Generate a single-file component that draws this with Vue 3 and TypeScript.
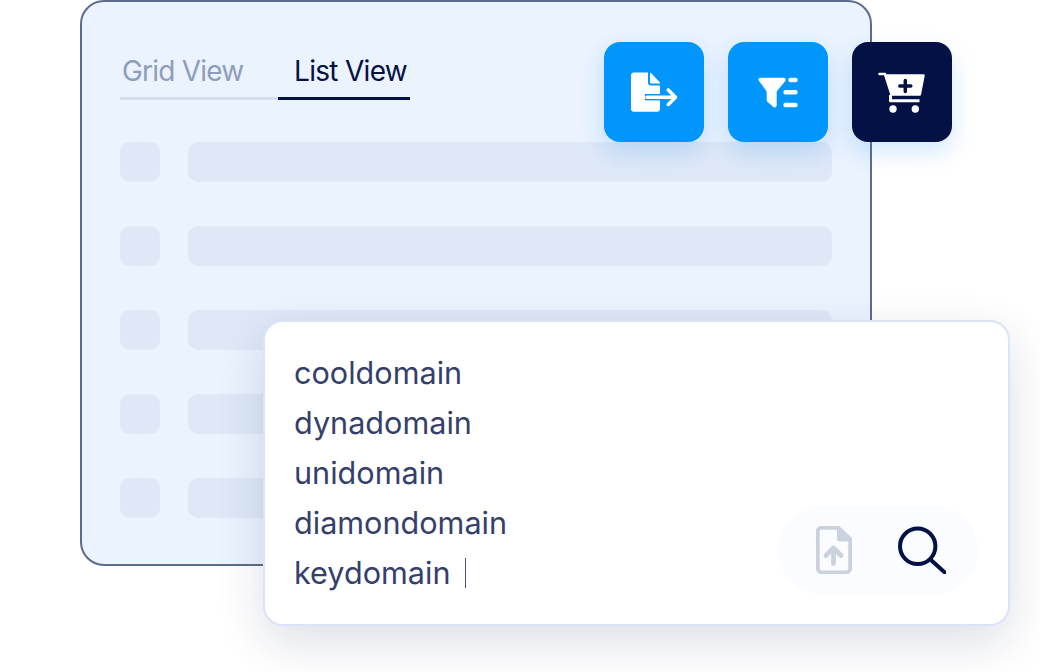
<script setup lang="ts">
const rows = [1, 2, 3, 4, 5]
const domains = ['cooldomain', 'dynadomain', 'unidomain', 'diamondomain', 'keydomain']
</script>

<template>
  <div class="page">
    <div class="window">
      <div class="tabs">
        <div class="tab tab-grid">Grid View</div>
        <div class="tab tab-list">List View</div>
      </div>
      <div class="rows">
        <div v-for="row in rows" :key="row" class="row">
          <div class="thumb"></div>
          <div class="bar"></div>
        </div>
      </div>
    </div>

    <div class="actions">
      <div class="action blue">
        <svg width="100" height="100" viewBox="0 0 100 100">
          <path d="M30 30.500h14v10a3 3 0 0 0 3 3H56V66.700a3 3 0 0 1-3 3H30a3 3 0 0 1-3-3V33.500a3 3 0 0 1 3-3z" fill="#fff" />
          <path d="M46.500 31 56 41H46.500z" fill="#fff" stroke="#fff" stroke-width="1" stroke-linejoin="round" />
          <path d="M41 55.200h17" stroke="#0096fb" stroke-width="6.400" fill="none" />
          <path d="M43 55.200h28M64.300 48l7.200 7.200-7.200 7.200" stroke="#fff" stroke-width="3.600" stroke-linecap="round" stroke-linejoin="round" fill="none" />
        </svg>
      </div>
      <div class="action blue">
        <svg width="100" height="100" viewBox="0 0 100 100">
          <path d="M32.500 35.700h23c2 0 3 1.800 1.800 3.300L48.700 49.500v13.500c0 2-1.500 3.200-3 2.200l-5.500-4.700c-1-.9-1.500-1.500-1.500-2.800v-8.200L31 39c-1.200-1.500-.5-3.300 1.500-3.300z" fill="#fff" />
          <path d="M62.500 38h5M57.500 50.300h10M57.500 63h10" stroke="#fff" stroke-width="4.400" stroke-linecap="round" fill="none" />
        </svg>
      </div>
      <div class="action dark">
        <svg width="100" height="100" viewBox="0 0 100 100">
          <path d="M27.500 32h5.500l6.500 20.500h28.300L71.500 33.500H33.500" fill="#fff" stroke="#fff" stroke-width="2.500" stroke-linejoin="round" stroke-linecap="round" />
          <path d="M38.500 53v5.700h29" stroke="#fff" stroke-width="3" fill="none" stroke-linejoin="round" />
          <circle cx="41" cy="67" r="3.700" fill="#fff" />
          <circle cx="63.300" cy="67" r="3.700" fill="#fff" />
          <path d="M53.300 38.500v11M47.800 44h11" stroke="#041145" stroke-width="3.500" stroke-linecap="round" fill="none" />
        </svg>
      </div>
    </div>

    <div class="panel">
      <div class="domains">
        <div v-for="(domain, i) in domains" :key="domain" class="domain">
          {{ domain }}<span v-if="i === domains.length - 1" class="caret"></span>
        </div>
      </div>
      <div class="tools">
        <svg width="36" height="48" viewBox="0 0 36 48">
          <path d="M4 1.900h18.500L34.200 13v29.300a4 4 0 0 1-4 4H5.800a4 4 0 0 1-4-4V4z" fill="none" stroke="#ccd1de" stroke-width="3.800" stroke-linejoin="round" />
          <path d="M21 2h2.500L34 12v3.500H24a3 3 0 0 1-3-3z" fill="#ccd1de" />
          <path d="M17.500 37.500V23M10 29.500l7.500-7.500 7.500 7.500" stroke="#ccd1de" stroke-width="4.800" stroke-linecap="round" stroke-linejoin="round" fill="none" />
        </svg>
        <svg width="48" height="48" viewBox="0 0 48 48">
          <circle cx="19.700" cy="20.300" r="17.700" fill="none" stroke="#041145" stroke-width="4" />
          <path d="M33 34 46.500 46.300" stroke="#041145" stroke-width="4" stroke-linecap="round" fill="none" />
        </svg>
      </div>
    </div>
  </div>
</template>

<style>
html,
body {
  margin: 0;
  background: #fff;
}
</style>

<style scoped>
.page {
  position: relative;
  width: 1040px;
  height: 672px;
  overflow: hidden;
  font-family: Inter, "Liberation Sans", sans-serif;
}

.window {
  box-sizing: border-box;
  width: 792px;
  height: 566px;
  margin-left: 80px;
  padding: 50px 38px 0;
  background: #eaf3fe;
  border: 2px solid #5d6b8f;
  border-radius: 24px;
}

.tabs {
  display: flex;
  width: 290px;
  height: 48px;
}

.tab {
  box-sizing: border-box;
  font-size: 28px;
  line-height: 38px;
  height: 48px;
}

.tab-grid {
  width: 158px;
  padding-left: 2px;
  letter-spacing: -0.8px;
  color: #8f9dbc;
  border-bottom: 3px solid #d5deee;
}

.tab-list {
  width: 132px;
  padding-left: 16px;
  letter-spacing: -0.7px;
  color: #041145;
  border-bottom: 3px solid #041145;
}

.rows {
  display: flex;
  flex-direction: column;
  gap: 44px;
  margin-top: 42px;
}

.row {
  display: flex;
  gap: 28px;
}

.thumb {
  width: 40px;
  height: 40px;
  border-radius: 10px;
  background: #dee8f7;
}

.bar {
  width: 644px;
  height: 40px;
  border-radius: 10px;
  background: #dee8f7;
}

.actions {
  position: absolute;
  top: 42px;
  left: 604px;
  display: flex;
  gap: 24px;
}

.action {
  width: 100px;
  height: 100px;
  border-radius: 16px;
}

.action svg {
  display: block;
}

.blue {
  background: #0096fb;
  box-shadow: 0 10px 24px rgba(0, 120, 240, 0.18);
}

.dark {
  background: #041145;
  box-shadow: 0 10px 24px rgba(0, 120, 240, 0.18);
}

.panel {
  position: absolute;
  top: 320px;
  left: 263px;
  box-sizing: border-box;
  width: 747px;
  height: 306px;
  padding: 26px 29px;
  background: #fff;
  border: 2px solid #dbe3f8;
  border-radius: 20px;
  box-shadow: 0 16px 48px rgba(15, 30, 80, 0.14);
}

.domain {
  display: flex;
  align-items: center;
  font-size: 30.600px;
  line-height: 50px;
  color: #353f6b;
}

.caret {
  width: 1.200px;
  height: 30px;
  margin-left: 14.500px;
  background: #4a5378;
}

.tools {
  position: absolute;
  top: 184px;
  left: 513px;
  display: flex;
  align-items: center;
  justify-content: space-between;
  box-sizing: border-box;
  width: 200px;
  height: 88px;
  padding: 0 32px 0 38px;
  background: #fbfcff;
  border-radius: 44px;
}
</style>
